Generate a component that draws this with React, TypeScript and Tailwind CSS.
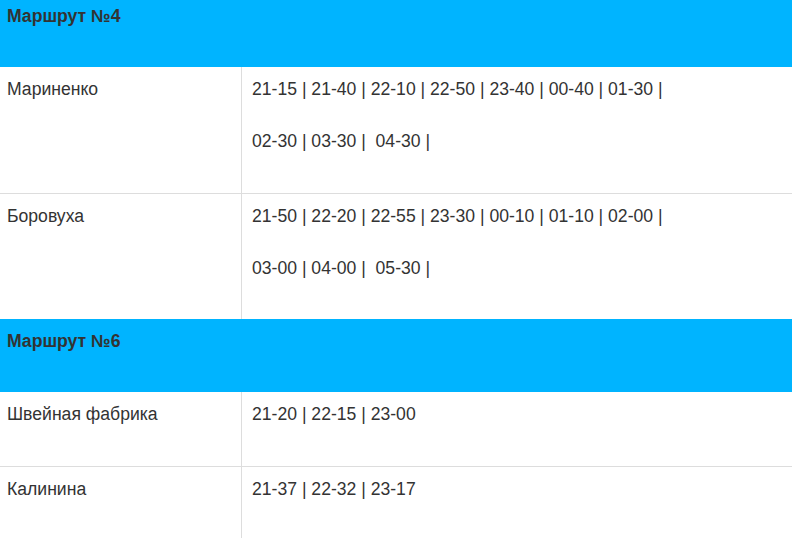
import React from "react";

type Row = { name: string; lines: string[]; h: string; border: boolean };

function Header({ title }: { title: string }) {
  return (
    <div className="h-[73px] w-full bg-[#00b4ff] pl-[7px] pt-[10px] font-bold leading-[24px] text-[#333]">
      {title}
    </div>
  );
}

function DataRow({ row }: { row: Row }) {
  return (
    <div className={`flex w-full ${row.h} ${row.border ? "border-b border-[#ddd]" : ""}`}>
      <div className="w-[242px] shrink-0 border-r border-[#ddd] pl-[7px] pt-[10px] leading-[24px]">
        {row.name}
      </div>
      <div className="flex-1 pl-[10px] pt-[10px] leading-[24px]">
        {row.lines.map((l, i) => (
          <p key={i} className="mb-[28px] whitespace-pre">
            {l}
          </p>
        ))}
      </div>
    </div>
  );
}

export default function App() {
  const r1: Row = {
    name: "Мариненко",
    lines: [
      "21-15 | 21-40 | 22-10 | 22-50 | 23-40 | 00-40 | 01-30 |",
      "02-30 | 03-30 |\u00a0 04-30 |",
    ],
    h: "h-[127px]",
    border: true,
  };
  const r2: Row = {
    name: "Боровуха",
    lines: [
      "21-50 | 22-20 | 22-55 | 23-30 | 00-10 | 01-10 | 02-00 |",
      "03-00 | 04-00 |\u00a0 05-30 |",
    ],
    h: "h-[125px]",
    border: false,
  };
  const r3: Row = {
    name: "Швейная фабрика",
    lines: ["21-20 | 22-15 | 23-00"],
    h: "h-[75px]",
    border: true,
  };
  const r4: Row = {
    name: "Калинина",
    lines: ["21-37 | 22-32 | 23-17"],
    h: "h-[90px]",
    border: false,
  };
  return (
    <div
      className="h-[538px] w-[792px] overflow-hidden bg-white text-[17.6px] text-[#333]"
      style={{ fontFamily: '"Liberation Sans", Arial, sans-serif' }}
    >
      <div className="-mt-[6px] flex flex-col">
        <Header title="Маршрут №4" />
        <DataRow row={r1} />
        <DataRow row={r2} />
        <Header title="Маршрут №6" />
        <DataRow row={r3} />
        <DataRow row={r4} />
      </div>
    </div>
  );
}
